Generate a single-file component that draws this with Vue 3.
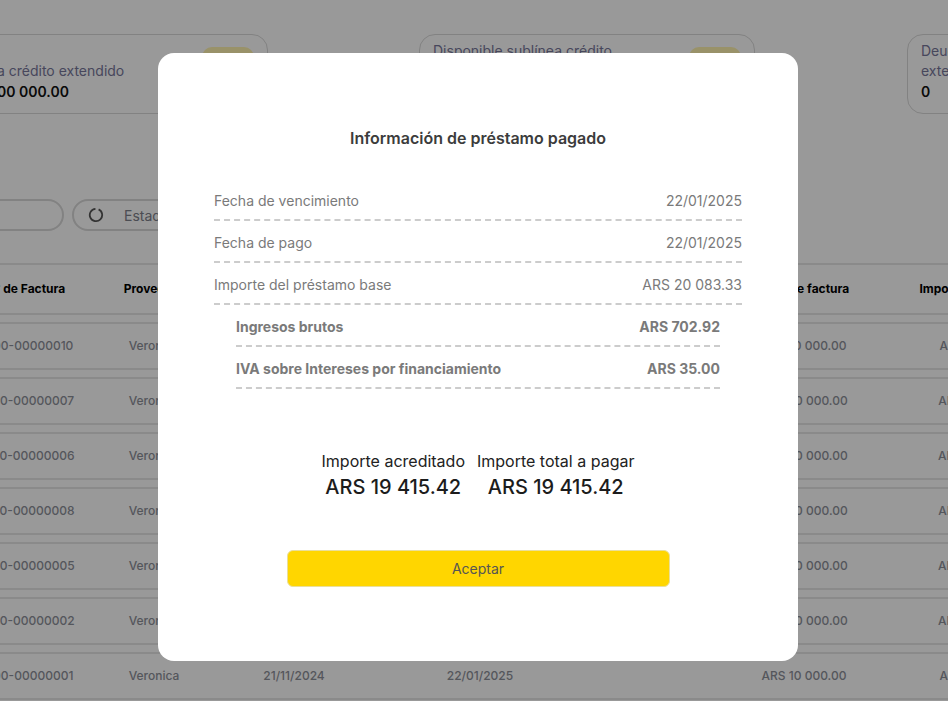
<script setup>
const cards = [
  { lines: ['Disponible línea crédito extendido'], value: 'ARS 101 000 000 000.00', badge: true },
  { lines: ['Disponible sublínea crédito', 'extendido'], value: 'ARS 50 000 000.00', badge: true },
  { lines: ['Deuda línea crédito', 'extendido'], value: '0', badge: false }
]
const headers = ['N° de Factura', 'Proveedor', 'Fecha de emisión', 'Fecha de vencimiento', 'Estado', 'Neto de factura', 'Importe del préstamo']
const rows = [
  ['0000-00000010', 'ARS 10 000.00', 'ARS 10 000.00'],
  ['0000-00000007', 'ARS 20 000.00', 'ARS 20 000.00'],
  ['0000-00000006', 'ARS 20 000.00', 'ARS 40 000.00'],
  ['0000-00000008', 'ARS 30 000.00', 'ARS 30 000.00'],
  ['0000-00000005', 'ARS 30 000.00', 'ARS 40 000.00'],
  ['0000-00000002', 'ARS 30 000.00', 'ARS 40 000.00'],
  ['0000-00000001', 'ARS 10 000.00', 'ARS 10 000.00']
]
const details = [
  { label: 'Fecha de vencimiento', value: '22/01/2025' },
  { label: 'Fecha de pago', value: '22/01/2025' },
  { label: 'Importe del préstamo base', value: 'ARS 20 083.33' },
  { label: 'Ingresos brutos', value: 'ARS 702.92', sub: true },
  { label: 'IVA sobre Intereses por financiamiento', value: 'ARS 35.00', sub: true }
]
const totals = [
  { label: 'Importe acreditado', value: 'ARS 19 415.42' },
  { label: 'Importe total a pagar', value: 'ARS 19 415.42' }
]
</script>

<template>
  <div class="viewport">
    <div class="page">
      <div class="cards">
        <div v-for="card in cards" :key="card.value" class="card">
          <div class="card-text">
            <div class="card-label">
              <div v-for="line in card.lines" :key="line">{{ line }}</div>
            </div>
            <div class="card-value">{{ card.value }}</div>
          </div>
          <div v-if="card.badge" class="badge"></div>
        </div>
      </div>

      <div class="filters">
        <div class="pill pill-search"></div>
        <div class="pill pill-state">
          <svg class="state-icon" width="16" height="16" viewBox="0 0 16 16" fill="none">
            <path d="M10.6 2.38A6.2 6.2 0 1 1 7.46 1.82" stroke="#555" stroke-width="1.8" />
          </svg>
          <span>Estado</span>
        </div>
      </div>

      <div class="table">
        <div class="tr head">
          <div v-for="h in headers" :key="h" class="cell">{{ h }}</div>
        </div>
        <div v-for="row in rows" :key="row[0]" class="tr body">
          <div class="cell">{{ row[0] }}</div>
          <div class="cell">Veronica</div>
          <div class="cell">21/11/2024</div>
          <div class="cell">22/01/2025</div>
          <div class="cell"></div>
          <div class="cell">{{ row[1] }}</div>
          <div class="cell">{{ row[2] }}</div>
        </div>
      </div>
    </div>

    <div class="overlay">
      <div class="modal">
        <h2 class="title">Información de préstamo pagado</h2>
        <div class="details">
          <div v-for="d in details" :key="d.label" class="detail" :class="{ sub: d.sub }">
            <span>{{ d.label }}</span>
            <span>{{ d.value }}</span>
          </div>
        </div>
        <div class="totals">
          <div v-for="t in totals" :key="t.label" class="total">
            <div class="total-label">{{ t.label }}</div>
            <div class="total-value">{{ t.value }}</div>
          </div>
        </div>
        <button class="accept" type="button">Aceptar</button>
      </div>
    </div>
  </div>
</template>

<style>
html, body { margin: 0; padding: 0; overflow: hidden; }
</style>

<style scoped>
.viewport {
  position: relative;
  width: 948px;
  height: 701px;
  overflow: hidden;
  background: #fff;
  font-family: Inter, "Liberation Sans", sans-serif;
}
.page {
  width: 1357px;
  margin-left: -114px;
  padding-top: 34px;
}
.cards {
  display: flex;
  gap: 151px;
}
.card {
  box-sizing: border-box;
  width: 336px;
  height: 80px;
  border: 1px solid #d9d9d9;
  border-radius: 16px;
  padding: 6px 13px;
  display: flex;
  justify-content: space-between;
  align-items: flex-start;
}
.card:first-child { width: 382px; }
.card:last-child { margin-left: 1px; }
.card-text { height: 61px; display: flex; flex-direction: column; justify-content: flex-end; }
.card-label { font-size: 14px; line-height: 20px; color: #77779a; }
.card-value { font-size: 14px; line-height: 20px; font-weight: 600; color: #111; margin-top: 1px; }
.badge {
  width: 52px;
  height: 30px;
  margin-top: 6px;
  border-radius: 10px;
  background: #fff3b0;
}
.filters {
  display: flex;
  gap: 8px;
  margin-top: 85px;
  margin-left: -22px;
}
.pill {
  box-sizing: border-box;
  height: 32px;
  border: 2px solid #d9d9d9;
  border-radius: 16px;
  display: flex;
  align-items: center;
  font-size: 14px;
  color: #7d808a;
}
.pill-search { width: 200px; }
.pill-state { width: 300px; }
.state-icon { margin-left: 14px; margin-right: 20px; }
.table { margin-top: 32px; margin-left: 46px; }
.tr {
  display: grid;
  grid-template-columns: 187px 70px 210px 162px 139px 208px 148px;
  align-items: center;
  box-sizing: border-box;
  padding-bottom: 2px;
  border-top: 2px solid #e6e6e6;
  border-bottom: 2px solid #e6e6e6;
}
.head { height: 52px; margin-bottom: 7px; font-size: 12px; font-weight: 700; color: #000; }
.body { height: 48px; margin-bottom: 7px; font-size: 12px; color: #8d9099; font-weight: 500; }
.cell { text-align: center; white-space: nowrap; }
.overlay {
  position: absolute;
  inset: 0;
  background: rgba(0, 0, 0, 0.4);
  padding: 53px 0 0 158px;
  box-sizing: border-box;
}
.modal {
  box-sizing: border-box;
  width: 640px;
  height: 608px;
  background: #fff;
  border-radius: 16px;
  padding: 75px 56px 0;
}
.title {
  margin: 0;
  text-align: center;
  font-size: 16px;
  line-height: 20px;
  font-weight: 600;
  color: #3c3c3c;
}
.details { margin-top: 31px; }
.detail {
  box-sizing: border-box;
  height: 42px;
  display: flex;
  justify-content: space-between;
  align-items: center;
  padding-top: 2px;
  border-bottom: 2px dashed #ccc;
  font-size: 14px;
  color: #7a7a7a;
}
.detail.sub { margin: 0 22px; font-weight: 700; }
.totals {
  display: flex;
  justify-content: center;
  gap: 12px;
  margin-top: 62px;
}
.total { text-align: center; }
.total-label { font-size: 16px; line-height: 21px; color: #222; }
.total-value { font-size: 20px; line-height: 30px; font-weight: 500; color: #1c1c1c; }
.accept {
  display: block;
  box-sizing: border-box;
  width: 383px;
  height: 37px;
  margin: 48px auto 0;
  border: 1px solid #eadf9a;
  border-radius: 6px;
  background: #ffd600;
  color: #555;
  font-family: inherit;
  font-size: 14px;
}
</style>
